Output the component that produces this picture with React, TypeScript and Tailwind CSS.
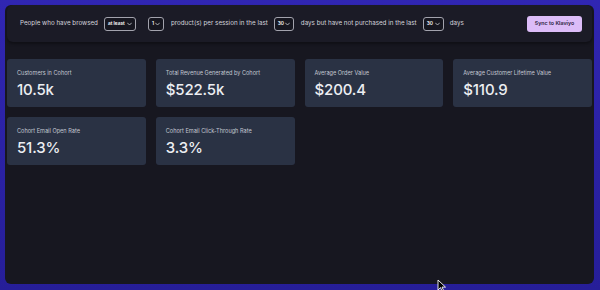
import React from "react";

function Chevron() {
  return (
    <svg width="5" height="4" viewBox="0 0 10 6" fill="none" className="shrink-0">
      <path d="M1 1l4 4 4-4" stroke="#d1d5db" strokeWidth="1.6" strokeLinecap="round" strokeLinejoin="round" />
    </svg>
  );
}

function Select({ value, w }: { value: string; w: string }) {
  return (
    <div className={`flex h-[14px] shrink-0 items-center justify-between rounded-[3px] border border-[#a3a3ad] bg-[#16161f] pl-[3px] pr-[3px] ${w}`}>
      <span className="text-[4.8px] font-semibold leading-none text-white">{value}</span>
      <Chevron />
    </div>
  );
}

const cards = [
  { label: "Customers in Cohort", value: "10.5k" },
  { label: "Total Revenue Generated by Cohort", value: "$522.5k" },
  { label: "Average Order Value", value: "$200.4" },
  { label: "Average Customer Lifetime Value", value: "$110.9" },
  { label: "Cohort Email Open Rate", value: "51.3%" },
  { label: "Cohort Email Click-Through Rate", value: "3.3%" },
];

export default function App() {
  return (
    <div
      className="relative h-[290px] w-[600px] overflow-hidden bg-gradient-to-b from-[#3026b2] to-[#261e98] p-[5px] pr-[6px] pb-[6px]"
      style={{ fontFamily: "Inter, 'Noto Sans', sans-serif" }}
    >
      <div className="flex h-full flex-col rounded-[6px] bg-[#171720] px-[2px]">
        <div className="flex h-[37px] shrink-0 items-center rounded-[6px] bg-[#1b1b26] pl-[13px] pr-[10px] text-[6.25px] text-[#d4d4dc] shadow-[0_2px_3px_rgba(0,0,0,0.35)]">
          <span className="shrink-0 whitespace-nowrap">People who have browsed</span>
          <div className="ml-[6px]">
            <Select value="at least" w="w-[32px]" />
          </div>
          <div className="ml-[12px]">
            <Select value="1" w="w-[16px]" />
          </div>
          <span className="ml-[7px] shrink-0 whitespace-nowrap">product(s) per session in the last</span>
          <div className="ml-[6px]">
            <Select value="30" w="w-[20px]" />
          </div>
          <span className="ml-[7px] shrink-0 whitespace-nowrap">days but have not purchased in the last</span>
          <div className="ml-[6px]">
            <Select value="30" w="w-[21px]" />
          </div>
          <span className="ml-[6px] shrink-0">days</span>
          <button className="ml-auto flex h-[16px] w-[55px] shrink-0 items-center justify-center rounded-[3px] bg-[#dcbcf8] text-[5.3px] font-semibold text-[#2a2140]">
            Sync to Klaviyo
          </button>
        </div>
        <div className="mt-[17px] grid grid-cols-4 gap-x-[10px] gap-y-[10px]">
          {cards.map((c) => (
            <div key={c.label} className="flex h-[48px] flex-col rounded-[3px] bg-[#2a3244] pl-[10px] pt-[10px]">
              <span className="text-[5.6px] leading-[8px] text-[#c3c8d2]">{c.label}</span>
              <span className="mt-[3px] text-[15px] font-medium leading-[20px] tracking-[-0.01em] text-[#eceef2]">{c.value}</span>
            </div>
          ))}
        </div>
      </div>
      <svg className="absolute left-[437px] top-[279px]" width="10" height="14" viewBox="0 0 10 14">
        <path d="M1 1v10l2.5-2.4 1.8 4 1.5-.7-1.8-3.8H8.5z" fill="#000" stroke="#fff" strokeWidth="0.9" />
      </svg>
    </div>
  );
}
